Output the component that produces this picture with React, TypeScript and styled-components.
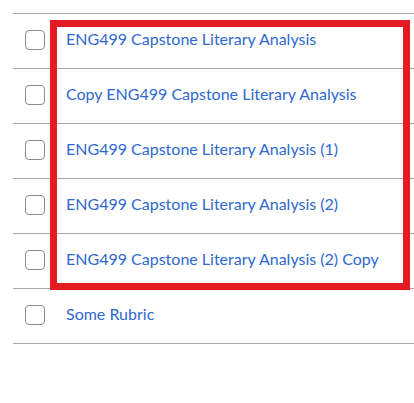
import React from "react";
import styled, { createGlobalStyle } from "styled-components";

const Global = createGlobalStyle`
  html, body { margin: 0; padding: 0; background: #ffffff; }
  body { font-family: Lato, "Open Sans", sans-serif; }
`;

const Page = styled.div`
  width: 414px;
  height: 403px;
  padding: 13px 0 0 13px;
  box-sizing: border-box;
  position: relative;
  overflow: hidden;
`;

const List = styled.ul`
  list-style: none;
  margin: 0;
  padding: 0;
  border-top: 1px solid #a8a8a8;
`;

const Row = styled.li`
  display: flex;
  align-items: center;
  height: 54px;
  border-bottom: 1px solid #a8a8a8;
  padding-left: 12px;
`;

const Box = styled.span`
  width: 18px;
  height: 18px;
  border: 1px solid #8c8c8c;
  border-radius: 4px;
  flex: none;
  margin-right: 21px;
  margin-bottom: 2px;
`;

const Link = styled.a`
  font-family: Lato, "Open Sans", sans-serif;
  font-size: 16px;
  line-height: 20px;
  color: #2f69cf;
  text-decoration: none;
  white-space: nowrap;
  margin-bottom: 5px;
`;

const Highlight = styled.div`
  position: absolute;
  left: 50px;
  top: 20px;
  width: 360px;
  height: 270px;
  border: 7px solid #e31b23;
  box-sizing: border-box;
  pointer-events: none;
`;

const items = [
  "ENG499 Capstone Literary Analysis",
  "Copy ENG499 Capstone Literary Analysis",
  "ENG499 Capstone Literary Analysis (1)",
  "ENG499 Capstone Literary Analysis (2)",
  "ENG499 Capstone Literary Analysis (2) Copy",
  "Some Rubric",
];

export default function App() {
  return (
    <>
      <Global />
      <Page>
        <List>
          {items.map((t) => (
            <Row key={t}>
              <Box />
              <Link href="#">{t}</Link>
            </Row>
          ))}
        </List>
        <Highlight />
      </Page>
    </>
  );
}
